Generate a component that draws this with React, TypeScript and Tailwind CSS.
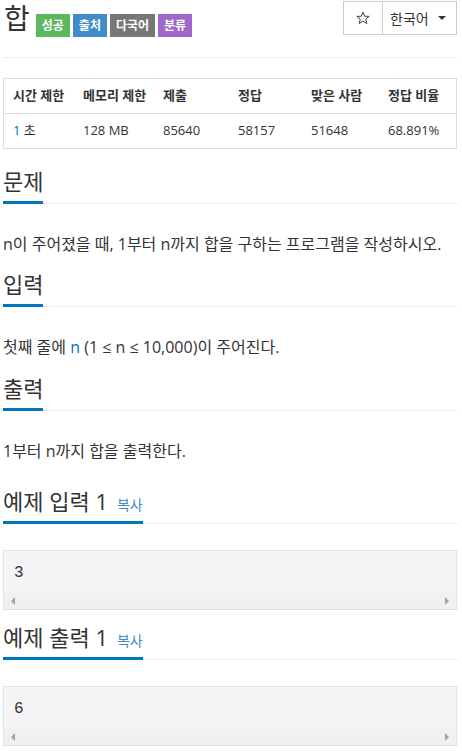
import React from "react";

const labels = [
  { text: "성공", cls: "bg-[#5cb85c]" },
  { text: "출처", cls: "bg-[#428bca]" },
  { text: "다국어", cls: "bg-[#777777]" },
  { text: "분류", cls: "bg-[#9f67c9]" },
];

const stats = {
  head: ["시간 제한", "메모리 제한", "제출", "정답", "맞은 사람", "정답 비율"],
  body: ["128 MB", "85640", "58157", "51648", "68.891%"],
};

const Headline = ({ title, copy }: { title: string; copy?: boolean }) => (
  <div className="flex items-end">
    <h2 className="flex items-baseline gap-[9px] border-b-[3px] border-[#0076c0] pb-[6px] text-[22px] leading-[28px] text-[#333]">
      <span>{title}</span>
      {copy && <span className="text-[14px] leading-[20px] text-[#428bca]">복사</span>}
    </h2>
    <div className="flex-1 border-b border-dotted border-[#ddd]" />
  </div>
);

const Sample = ({ value }: { value: string }) => (
  <div className="mt-[26px] border border-[#e1e1e8] bg-[#f5f5f7]">
    <pre className="h-[42px] px-[10px] pt-[12px] font-['Liberation_Mono',monospace] text-[16px] leading-[20px] text-[#333]">
      {value}
    </pre>
    <div className="flex h-[16px] items-center justify-between bg-[#f0f0f0] px-[7px]">
      <span className="h-0 w-0 border-y-[4px] border-r-[4px] border-y-transparent border-r-[#a3a3a3]" />
      <span className="h-0 w-0 border-y-[4px] border-l-[4px] border-y-transparent border-l-[#a3a3a3]" />
    </div>
  </div>
);

export default function App() {
  return (
    <div className="min-h-[751px] bg-white pl-[3px] pr-[5px] font-['Open_Sans','Noto_Sans_CJK_KR',sans-serif] text-[#333]">
      {/* title row */}
      <div className="flex justify-between border-b border-[#eee] pb-[20px]">
        <div className="flex items-start">
          <h1 className="pl-[1px] text-[28px] leading-[36px] text-[#333]">합</h1>
          <div className="ml-[6px] mt-[14px] flex gap-[3px]">
            {labels.map((l) => (
              <span
                key={l.text}
                className={`${l.cls} flex h-[23px] items-center px-[6px] text-[12px] font-bold text-white`}
              >
                {l.text}
              </span>
            ))}
          </div>
        </div>
        <div className="mt-[1px] flex h-[34px] border border-[#ccc] text-[14px]">
          <button className="flex w-[39px] items-center justify-center border-r border-[#ccc]">
            <svg width="14" height="14" viewBox="0 0 24 24" fill="none" stroke="#333" strokeWidth="1.6" strokeLinejoin="miter">
              <polygon points="12,2 14.9,9 22.5,9.2 16.6,14 18.6,21.5 12,17.3 5.4,21.5 7.4,14 1.5,9.2 9.1,9" />
            </svg>
          </button>
          <button className="flex w-[73px] items-center justify-between pl-[7px] pr-[10px]">
            <span>한국어</span>
            <span className="h-0 w-0 border-x-[4px] border-t-[4px] border-x-transparent border-t-[#333]" />
          </button>
        </div>
      </div>

      {/* stats table */}
      <div className="mt-[20px] border border-[#ddd] text-[13px]">
        <div className="grid h-[35px] grid-cols-[70px_80px_75px_73px_77px_1fr] items-center border-b border-[#ddd] font-bold">
          {stats.head.map((h) => (
            <div key={h} className="pl-[9px]">
              {h}
            </div>
          ))}
        </div>
        <div className="grid h-[34px] grid-cols-[70px_80px_75px_73px_77px_1fr] items-center">
          <div className="pl-[9px]">
            <span className="text-[#0076c0]">1</span> 초
          </div>
          {stats.body.map((v) => (
            <div key={v} className="pl-[9px]">
              {v}
            </div>
          ))}
        </div>
      </div>

      <section className="mt-[18px]">
        <Headline title="문제" />
        <p className="mt-[28px] text-[16px] leading-[24px]">
          n이 주어졌을 때, 1부터 n까지 합을 구하는 프로그램을 작성하시오.
        </p>
      </section>

      <section className="mt-[14px]">
        <Headline title="입력" />
        <p className="mt-[28px] text-[16px] leading-[24px]">
          첫째 줄에 <span className="text-[#0076c0]">n</span> (1 ≤ n ≤ 10,000)이 주어진다.
        </p>
      </section>

      <section className="mt-[15px]">
        <Headline title="출력" />
        <p className="mt-[28px] text-[16px] leading-[24px]">1부터 n까지 합을 출력한다.</p>
      </section>

      <section className="mt-[24px]">
        <Headline title="예제 입력 1" copy />
        <Sample value="3" />
      </section>

      <section className="mt-[13px]">
        <Headline title="예제 출력 1" copy />
        <Sample value="6" />
      </section>
    </div>
  );
}
